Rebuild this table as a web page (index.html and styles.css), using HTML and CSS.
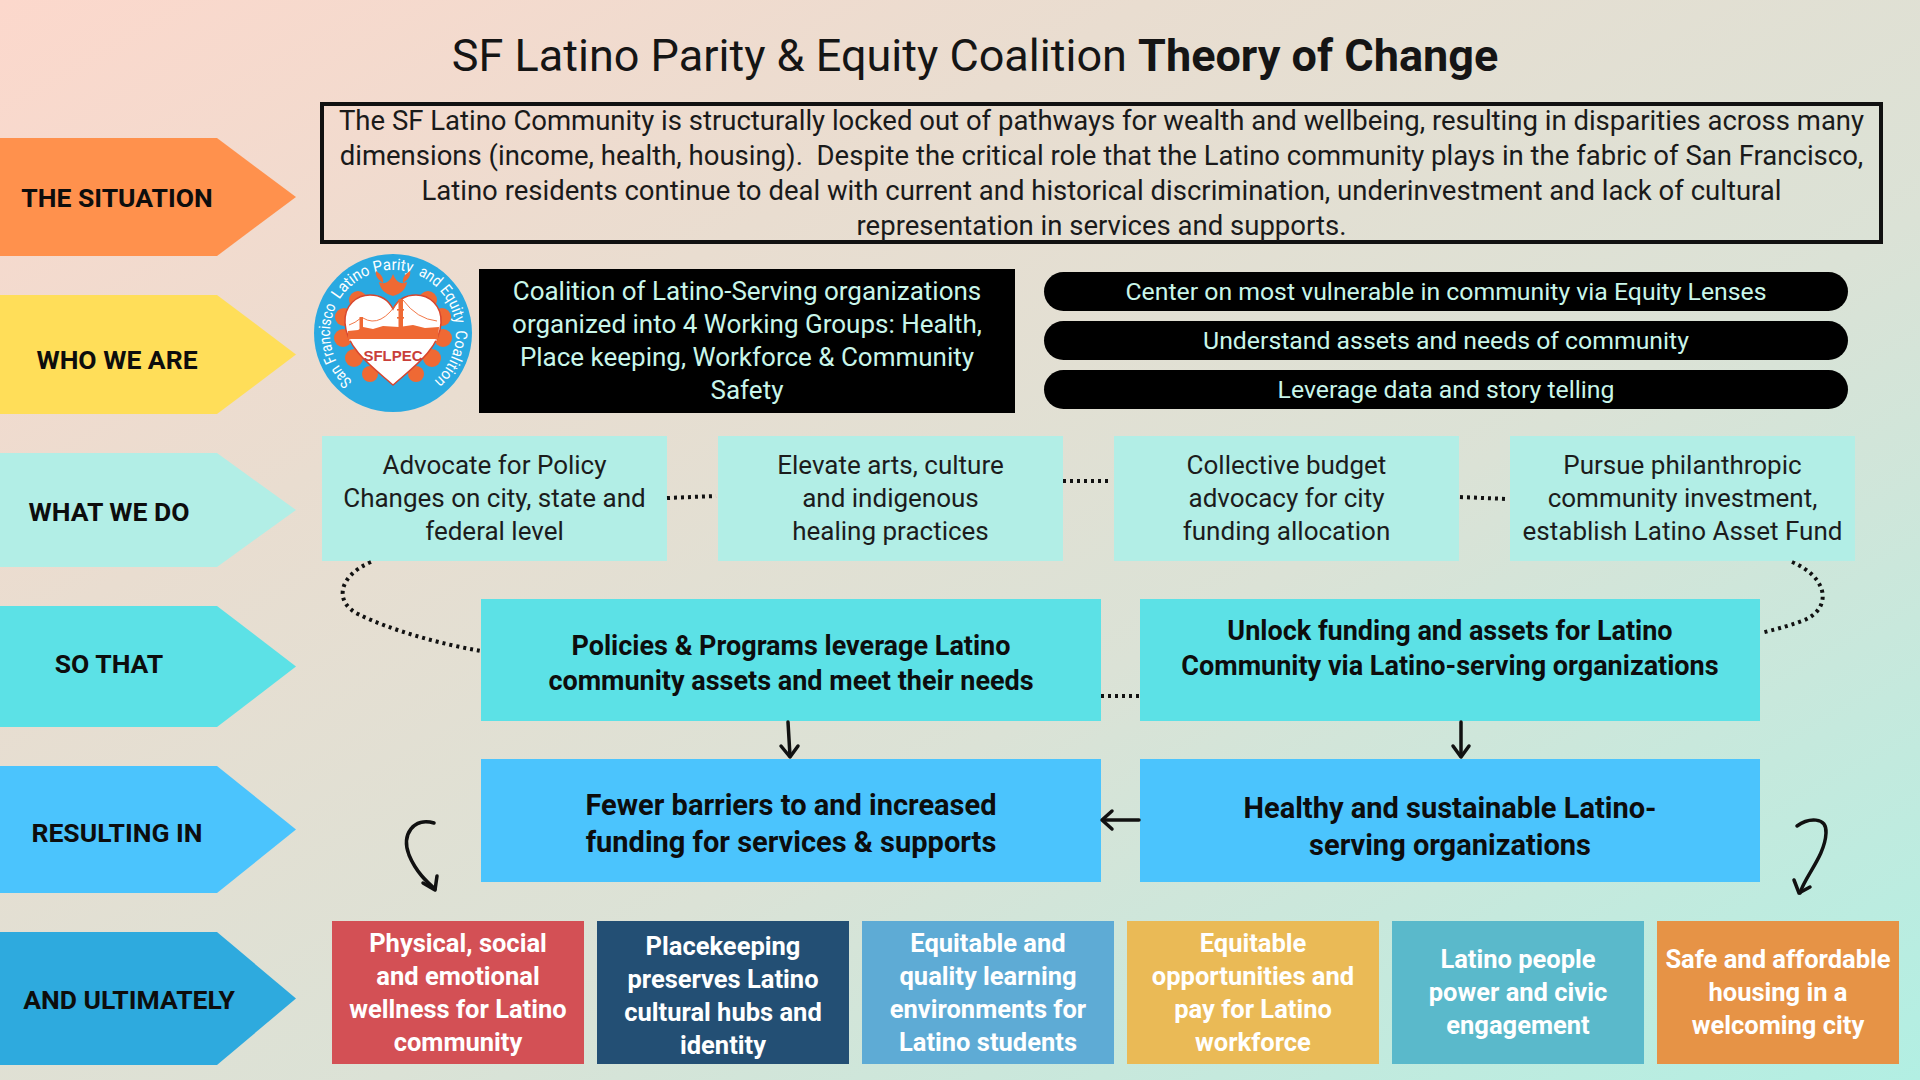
FILE: index.html
```html
<!DOCTYPE html>
<html lang="en">
<head>
<meta charset="utf-8">
<title>SF Latino Parity &amp; Equity Coalition Theory of Change</title>
<link rel="stylesheet" href="styles.css">
</head>
<body>
<div class="page">
  <h1 class="title">SF Latino Parity &amp; Equity Coalition <b>Theory of Change</b></h1>
  <div class="board">
    <div class="labels">
      <div class="label label-situation">THE SITUATION</div>
      <div class="label label-who">WHO WE ARE</div>
      <div class="label label-what">WHAT WE DO</div>
      <div class="label label-so">SO THAT</div>
      <div class="label label-result">RESULTING IN</div>
      <div class="label label-ult">AND ULTIMATELY</div>
    </div>
    <div class="content">
      <div class="situation">The SF Latino Community is structurally locked out of pathways for wealth and wellbeing, resulting in disparities across many<br>dimensions (income, health, housing).&nbsp; Despite the critical role that the Latino community plays in the fabric of San Francisco,<br>Latino residents continue to deal with current and historical discrimination, underinvestment and lack of cultural<br>representation in services and supports.</div>

      <div class="who">
        <svg class="logo" viewBox="0 0 160 160" width="160" height="160">
          <defs>
            <path id="arc1" d="M 39.5 128.3 A 63 63 0 0 1 23.3 52.6"/>
            <path id="arc2" d="M 26.4 46.9 A 63 63 0 0 1 98.9 19.9"/>
            <path id="arc3" d="M 104.9 22.1 A 63 63 0 0 1 142.3 70.9"/>
            <path id="arc4" d="M 142.9 77.3 A 63 63 0 0 1 120.5 128.3"/>
          </defs>
          <circle cx="80" cy="80" r="79" fill="#29a9e1"/>
          <text class="ring-text"><textPath href="#arc1" textLength="83" lengthAdjust="spacingAndGlyphs">San Francisco</textPath></text>
          <text class="ring-text"><textPath href="#arc2" textLength="83" lengthAdjust="spacingAndGlyphs">Latino Parity</textPath></text>
          <text class="ring-text"><textPath href="#arc3" textLength="64" lengthAdjust="spacingAndGlyphs">and Equity</textPath></text>
          <text class="ring-text"><textPath href="#arc4" textLength="57" lengthAdjust="spacingAndGlyphs">Coalition</textPath></text>
          <g fill="#ef6934">
            <circle cx="45" cy="47" r="9"/><circle cx="31" cy="64" r="9"/><circle cx="30" cy="85" r="9"/><circle cx="41" cy="105" r="9"/><circle cx="57" cy="121" r="8"/>
            <circle cx="115" cy="47" r="9"/><circle cx="129" cy="64" r="9"/><circle cx="130" cy="85" r="9"/><circle cx="119" cy="105" r="9"/><circle cx="103" cy="121" r="8"/>
            <path d="M80 21 C77 29 72 32 66 29 C67 36 72 41 80 43 C88 41 93 36 94 29 C88 32 83 29 80 21 Z"/>
            <path d="M70 30 C64 26 62 22 63 18 C68 21 71 25 70 30 Z"/>
            <path d="M90 30 C96 26 98 22 97 18 C92 21 89 25 90 30 Z"/>
          </g>
          <path d="M80 132 C62 116 33 96 32 70 C31 52 44 42 57 42 C68 42 76 48 80 56 C84 48 92 42 103 42 C116 42 129 52 128 70 C127 96 98 116 80 132 Z" fill="#ffffff" stroke="#d8452d" stroke-width="1.5"/>
          <g fill="#ef6934">
            <path d="M35 78 L45 77 L50 74 L60 76 L70 73 L86 74 L100 72 L112 75 L126 74 L125 86 L35 86 Z"/>
            <rect x="46.5" y="64" width="3.5" height="14"/>
            <rect x="85.5" y="46" width="4.5" height="30"/>
            <rect x="84" y="56" width="7" height="1.6"/>
            <rect x="84" y="64" width="7" height="1.6"/>
          </g>
          <g fill="none" stroke="#ef6934" stroke-width="0.9">
            <path d="M50 65 Q 68 76 86 47"/>
            <path d="M90 47 Q 104 66 124 68"/>
            <path d="M36 72 Q 42 70 48 65"/>
          </g>
          <path d="M36 87 L124 87" stroke="#ffffff" stroke-width="1.2"/>
          <text x="80" y="108" class="logo-abbr" text-anchor="middle">SFLPEC</text>
        </svg>
        <div class="coalition">Coalition of Latino-Serving organizations<br>organized into 4 Working Groups: Health,<br>Place keeping, Workforce &amp; Community<br>Safety</div>
        <div class="pills">
          <div class="pill">Center on most vulnerable in community via Equity Lenses</div>
          <div class="pill">Understand assets and needs of community</div>
          <div class="pill">Leverage data and story telling</div>
        </div>
      </div>

      <div class="what">
        <div class="what-box">Advocate for Policy<br>Changes on city, state and<br>federal level</div>
        <div class="what-box">Elevate arts, culture<br>and indigenous<br>healing practices</div>
        <div class="what-box">Collective budget<br>advocacy for city<br>funding allocation</div>
        <div class="what-box">Pursue philanthropic<br>community investment,<br>establish Latino Asset Fund</div>
      </div>

      <div class="pair pair-so">
        <div class="pair-box so-box so-box-low">Policies &amp; Programs leverage Latino<br>community assets and meet their needs</div>
        <div class="pair-box so-box so-box-raised">Unlock funding and assets for Latino<br>Community via Latino-serving organizations</div>
      </div>

      <div class="pair pair-result">
        <div class="pair-box result-box result-box-first">Fewer barriers to and increased<br>funding for services &amp; supports</div>
        <div class="pair-box result-box result-box-low">Healthy and sustainable Latino-<br>serving organizations</div>
      </div>

      <div class="outcomes">
        <div class="outcome outcome-red">Physical, social<br>and emotional<br>wellness for Latino<br>community</div>
        <div class="outcome outcome-navy outcome-low">Placekeeping<br>preserves Latino<br>cultural hubs and<br>identity</div>
        <div class="outcome outcome-blue">Equitable and<br>quality learning<br>environments for<br>Latino students</div>
        <div class="outcome outcome-yellow">Equitable<br>opportunities and<br>pay for Latino<br>workforce</div>
        <div class="outcome outcome-teal">Latino people<br>power and civic<br>engagement</div>
        <div class="outcome outcome-orange">Safe and affordable<br>housing in a<br>welcoming city</div>
      </div>
    </div>
  </div>

  <svg class="links" viewBox="0 0 1920 1080" width="1920" height="1080">
    <g class="dots">
      <path d="M667 498 L716 496"/>
      <path d="M1063 481 L1112 481"/>
      <path d="M1460 497 L1507 499"/>
      <path d="M1101 696 L1140 696"/>
      <path d="M371 562 C338 576 334 602 358 614 C390 630 440 644 481 651"/>
      <path d="M1792 562 C1830 578 1832 610 1802 621 C1786 627 1772 630 1761 633"/>
    </g>
    <g class="solid">
      <path d="M788 722 L790 756"/>
      <path d="M781 746 L790 757 L798 746"/>
      <path d="M1461 722 L1461 756"/>
      <path d="M1453 746 L1461 757 L1469 746"/>
      <path d="M1139 820 L1103 820"/>
      <path d="M1112 811 L1102 820 L1112 829"/>
      <path d="M434 823 C414 817 401 834 409 855 C416 872 427 882 435 889"/>
      <path d="M423 883 L435 890 L437 876"/>
      <path d="M1797 826 C1808 818 1827 816 1826 833 C1825 856 1805 876 1800 893"/>
      <path d="M1794 880 L1799 893 L1810 887"/>
    </g>
  </svg>
</div>
</body>
</html>
```
FILE: styles.css
```css
html, body {
  margin: 0;
  padding: 0;
}

body {
  width: 1920px;
  height: 1080px;
  overflow: hidden;
}

.page {
  position: relative;
  width: 1920px;
  height: 1080px;
  overflow: hidden;
  background: linear-gradient(to bottom right, #fcd8cc 0%, #e9ddd0 30%, #dbe2d6 60%, #b2efe3 100%);
  font-family: Roboto, "Liberation Sans", Arial, sans-serif;
  color: #111;
}

.title {
  margin: 0;
  height: 102px;
  box-sizing: border-box;
  padding: 8px 0 0 30px;
  display: flex;
  align-items: center;
  justify-content: center;
  font-size: 45px;
  font-weight: 400;
  color: #151515;
  white-space: pre;
}

.title b {
  font-weight: 700;
  font-size: 45px;
}

.board {
  display: grid;
  grid-template-columns: 320px 1fr;
}

/* Left column arrows */
.labels {
  padding-top: 36px;
  display: flex;
  flex-direction: column;
  gap: 39px;
}

.label {
  width: 296px;
  height: 118px;
  box-sizing: border-box;
  padding-right: 62px;
  clip-path: polygon(0 0, 217px 0, 296px 50%, 217px 100%, 0 100%);
  display: flex;
  align-items: center;
  justify-content: center;
  font-weight: 700;
  font-size: 26.5px;
  color: #0d0d0d;
  white-space: nowrap;
}

.label-situation { background: #ff914d; height: 118px; }
.label-who { background: #ffde59; height: 119px; padding-top: 10px; }
.label-what { background: #b2eee6; height: 114px; padding-top: 2px; padding-right: 78px; }
.label-so { background: #5ce1e6; height: 121px; padding-bottom: 6px; padding-right: 78px; }
.label-result { background: #4bc4fd; height: 127px; padding-top: 6px; }
.label-ult { background: #2eaade; height: 133px; padding-top: 2px; padding-right: 38px; }

/* Right column */
.content {
  display: flex;
  flex-direction: column;
  align-items: flex-start;
}

.situation {
  width: 1563px;
  height: 142px;
  box-sizing: border-box;
  border: 4px solid #111;
  display: flex;
  align-items: center;
  justify-content: center;
  text-align: center;
  font-size: 27.5px;
  line-height: 35px;
  color: #1a1a1a;
  white-space: nowrap;
}

.who {
  margin-top: 9px;
  height: 160px;
  display: flex;
  align-items: flex-start;
}

.logo {
  display: block;
  margin-left: -7px;
  flex: none;
}

.ring-text {
  fill: #ffffff;
  font-size: 16px;
  font-family: Roboto, "Liberation Sans", sans-serif;
}

.logo-abbr {
  fill: #c93f3a;
  font-size: 15px;
  font-weight: 700;
  font-family: "Liberation Sans", Roboto, sans-serif;
}

.coalition {
  margin: 16px 0 0 6px;
  width: 536px;
  height: 144px;
  background: #000;
  color: #c9f6ea;
  display: flex;
  align-items: center;
  justify-content: center;
  text-align: center;
  font-size: 26px;
  line-height: 33px;
  white-space: nowrap;
}

.pills {
  margin: 19px 0 0 29px;
  width: 804px;
  display: flex;
  flex-direction: column;
  gap: 10px;
}

.pill {
  height: 39px;
  border-radius: 20px;
  background: #000;
  color: #c9f6ea;
  display: flex;
  align-items: center;
  justify-content: center;
  font-size: 24.8px;
  white-space: nowrap;
}

.what {
  margin: 23px 0 0 2px;
  display: flex;
  gap: 51px;
}

.what-box {
  width: 345px;
  height: 125px;
  background: #b2eee6;
  display: flex;
  align-items: center;
  justify-content: center;
  text-align: center;
  font-size: 26px;
  line-height: 33px;
  color: #1c1c1c;
  white-space: nowrap;
}

.pair {
  margin: 38px 0 0 161px;
  display: flex;
  gap: 39px;
}

.pair-box {
  width: 620px;
  box-sizing: border-box;
  display: flex;
  align-items: center;
  justify-content: center;
  text-align: center;
  font-weight: 700;
  white-space: nowrap;
  color: #0d0d0d;
}

.so-box {
  height: 122px;
  background: #5ce1e6;
  font-size: 27px;
  line-height: 35px;
}

.so-box-low {
  padding-top: 7px;
}

.so-box-raised {
  padding-bottom: 22px;
}

.result-box {
  height: 123px;
  background: #4bc4fd;
  font-size: 29px;
  line-height: 37px;
}

.result-box-first {
  padding-top: 6px;
}

.result-box-low {
  padding-top: 12px;
}

.outcomes {
  margin: 39px 0 0 12px;
  display: grid;
  grid-template-columns: repeat(5, 252px) 242px;
  gap: 13px;
}

.outcome {
  height: 143px;
  box-sizing: border-box;
  display: flex;
  align-items: center;
  justify-content: center;
  text-align: center;
  color: #ffffff;
  font-weight: 700;
  font-size: 25.5px;
  line-height: 33px;
  white-space: nowrap;
}

.outcome-low { padding-top: 6px; }

.outcome-red { background: #d35055; }
.outcome-navy { background: #234f74; }
.outcome-blue { background: #5eabd5; }
.outcome-yellow { background: #eaba56; }
.outcome-teal { background: #5ab9cb; }
.outcome-orange { background: #e69346; }

/* Connector overlay */
.links {
  position: absolute;
  top: 0;
  left: 0;
  pointer-events: none;
}

.dots path {
  fill: none;
  stroke: #111;
  stroke-width: 4;
  stroke-dasharray: 3 4;
}

.solid path {
  fill: none;
  stroke: #111;
  stroke-width: 3.5;
  stroke-linecap: round;
  stroke-linejoin: round;
}
```
